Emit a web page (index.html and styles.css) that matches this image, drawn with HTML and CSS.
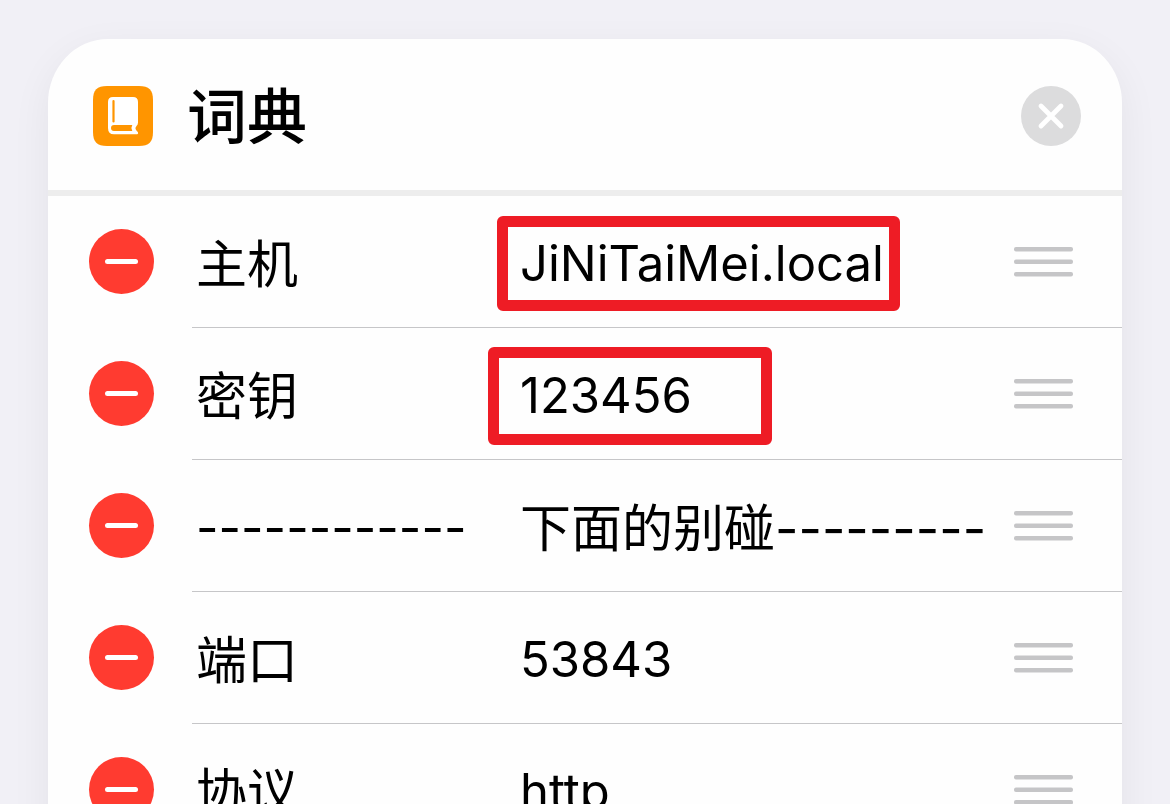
FILE: index.html
```
<!DOCTYPE html>
<html lang="zh-CN">
<head>
    <meta charset="UTF-8">
    <meta name="viewport" content="width=device-width, initial-scale=1.0">
    <title>词典</title>
    <link rel="stylesheet" href="styles.css">
</head>
<body>

    <!-- Drag handle, shared by all rows -->
    <svg class="sprite" aria-hidden="true">
        <symbol id="grip" viewBox="0 0 59 30">
            <rect width="59" height="4.500" rx="2"/>
            <rect y="12.500" width="59" height="4.500" rx="2"/>
            <rect y="25" width="59" height="4.500" rx="2"/>
        </symbol>
    </svg>

    <main class="page">
        <section class="card">
            <!-- Card header -->
            <header class="card-header">
                <svg class="app-icon" viewBox="0 0 60 60" aria-hidden="true">
                    <path fill="#ff9500" d="M14 0H46C56 0 60 4 60 14V46C60 56 56 60 46 60H14C4 60 0 56 0 46V14C0 4 4 0 14 0Z"/>
                    <path fill="#fff" d="M20 11H40Q45 11 45 16V36.500Q45 38.500 43.500 40Q41.500 42 43 44L44.800 46Q46 48.300 43 48.300H21Q15 48.300 15 42V16Q15 11 20 11Z"/>
                    <path fill="none" stroke="#ff9500" stroke-width="2.200" stroke-linecap="round" d="M20.500 15V35.500"/>
                    <path fill="#ff9500" d="M21 39H39.300Q37.500 42 39.300 45H21Q18 45 18 42Q18 39 21 39Z"/>
                </svg>
                <h1 class="card-title">词典</h1>
                <button class="close-btn" type="button" aria-label="关闭">
                    <svg viewBox="0 0 60 60" aria-hidden="true">
                        <circle cx="30" cy="30" r="30" fill="#dcdcdd"/>
                        <path d="M20 20L40 40M40 20L20 40" stroke="#fff" stroke-width="4.800" stroke-linecap="round"/>
                    </svg>
                </button>
            </header>

            <!-- Dictionary entries -->
            <ul class="rows">
                <li class="row">
                    <button class="remove-btn" type="button" aria-label="删除"></button>
                    <div class="row-body">
                        <input class="key" type="text" aria-label="键" value="主机">
                        <div class="value-cell">
                            <input class="value latin" type="text" aria-label="值" value="JiNiTaiMei.local">
                            <span class="mark mark-host"></span>
                        </div>
                        <button class="handle" type="button" aria-label="移动"><svg><use href="#grip"/></svg></button>
                    </div>
                </li>
                <li class="row">
                    <button class="remove-btn" type="button" aria-label="删除"></button>
                    <div class="row-body">
                        <input class="key" type="text" aria-label="键" value="密钥">
                        <div class="value-cell">
                            <input class="value latin" type="text" aria-label="值" value="123456">
                            <span class="mark mark-secret"></span>
                        </div>
                        <button class="handle" type="button" aria-label="移动"><svg><use href="#grip"/></svg></button>
                    </div>
                </li>
                <li class="row">
                    <button class="remove-btn" type="button" aria-label="删除"></button>
                    <div class="row-body">
                        <input class="key latin" type="text" aria-label="键" value="------------">
                        <div class="value-cell">
                            <input class="value" type="text" aria-label="值" value="下面的别碰---------">
                        </div>
                        <button class="handle" type="button" aria-label="移动"><svg><use href="#grip"/></svg></button>
                    </div>
                </li>
                <li class="row">
                    <button class="remove-btn" type="button" aria-label="删除"></button>
                    <div class="row-body">
                        <input class="key" type="text" aria-label="键" value="端口">
                        <div class="value-cell">
                            <input class="value latin" type="text" aria-label="值" value="53843">
                        </div>
                        <button class="handle" type="button" aria-label="移动"><svg><use href="#grip"/></svg></button>
                    </div>
                </li>
                <li class="row">
                    <button class="remove-btn" type="button" aria-label="删除"></button>
                    <div class="row-body">
                        <input class="key" type="text" aria-label="键" value="协议">
                        <div class="value-cell">
                            <input class="value latin" type="text" aria-label="值" value="http">
                        </div>
                        <button class="handle" type="button" aria-label="移动"><svg><use href="#grip"/></svg></button>
                    </div>
                </li>
            </ul>
        </section>
    </main>

</body>
</html>
```
FILE: styles.css
```
* {
    box-sizing: border-box;
}

body {
    margin: 0;
    background-color: #f1f0f6;
    color: #000;
    font-family: Inter, "Noto Sans CJK SC", sans-serif;
}

.sprite {
    display: none;
}

.page {
    height: 100vh;
    padding: 39px 48px 0;
    overflow: hidden;
}

.card {
    background-color: #fefefe;
    border-radius: 60px 60px 0 0 / 64px 64px 0 0;
    box-shadow: 0 12px 40px rgba(0, 0, 30, 0.06);
}

/* Header with icon, title and close button */
.card-header {
    display: flex;
    align-items: center;
    height: 157px;
    padding: 3px 41px 0 45px;
    border-bottom: 6px solid #ededed;
}

.app-icon {
    width: 60px;
    height: 60px;
}

.card-title {
    flex: 1;
    margin: 0 0 0 34px;
    padding-top: 2px;
    font-size: 60px;
    line-height: 80px;
    font-weight: 500;
}

button {
    padding: 0;
    border: 0;
    background: none;
    cursor: pointer;
}

button svg {
    display: block;
}

.close-btn {
    width: 60px;
    height: 60px;
}

/* Rows */
.rows {
    margin: 0;
    padding: 0;
    list-style: none;
}

.row {
    display: flex;
    align-items: center;
    gap: 38px;
    height: 132px;
    padding-left: 41px;
}

.remove-btn {
    display: flex;
    flex: none;
    align-items: center;
    justify-content: center;
    width: 65px;
    height: 65px;
    margin-bottom: 1px;
    border-radius: 50%;
    background-color: #ff3b30;
}

.remove-btn::before {
    content: "";
    width: 33px;
    height: 5px;
    border-radius: 3px;
    background-color: #fff;
}

.row-body {
    display: flex;
    flex: 1;
    align-items: center;
    min-width: 0;
    height: 100%;
    padding: 0 49px 0 4px;
    border-bottom: 1px solid #c6c6c8;
}

.key,
.value {
    display: block;
    height: 81px;
    padding: 0 0 2px;
    border: 0;
    outline: 0;
    background: none;
    color: inherit;
    font-family: inherit;
    font-size: 51px;
}

/* Inter runs wide next to the Chinese glyphs */
.latin {
    padding: 3px 0 0;
    font-size: 49px;
}

.key {
    flex: none;
    width: 324px;
}

.value-cell {
    position: relative;
    flex: 1;
    min-width: 0;
}

.value {
    width: 100%;
}

/* Red frames drawn over the important values */
.mark {
    position: absolute;
    border: 11px solid #ee1c25;
    border-radius: 6px;
    pointer-events: none;
}

.mark-host {
    top: -5px;
    left: -23px;
    width: 403px;
    height: 95px;
}

.mark-secret {
    top: -6px;
    left: -32px;
    width: 284px;
    height: 98px;
}

.handle {
    flex: none;
    width: 59px;
    margin-left: 8px;
}

.handle svg {
    width: 59px;
    height: 30px;
    fill: #c5c5c7;
}
```
